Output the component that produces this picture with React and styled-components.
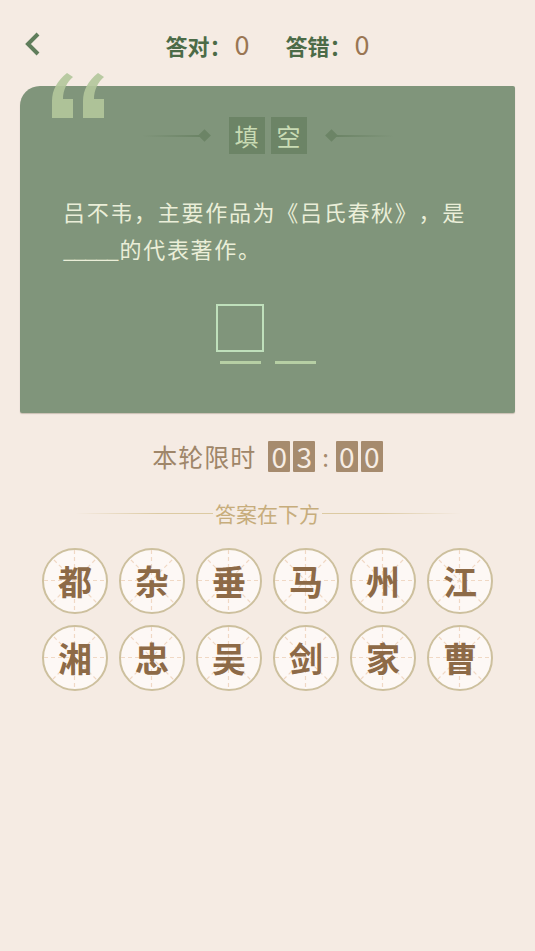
import React from "react";
import styled, { createGlobalStyle } from "styled-components";

const Global = createGlobalStyle`
  html, body { margin: 0; padding: 0; background: #f5ebe3; }
  body { font-family: "Noto Sans CJK SC", "Noto Sans", sans-serif; text-spacing-trim: space-all; }
  * { box-sizing: border-box; }
`;

const Page = styled.div`
  width: 535px;
  min-height: 951px;
  background: #f5ebe3;
  display: flex;
  flex-direction: column;
  align-items: center;
`;

const Header = styled.div`
  width: 100%;
  height: 86px;
  display: grid;
  grid-template-columns: 70px 1fr 70px;
  align-items: start;
  padding-top: 28px;
`;

const BackBtn = styled.div`
  padding-left: 23px;
  height: 32px;
  display: flex;
  align-items: center;
`;

const Scores = styled.div`
  display: flex;
  justify-content: center;
  gap: 36px;
  line-height: 32px;
  font-size: 22px;
`;

const Score = styled.div`
  display: flex;
  align-items: baseline;
`;

const ScoreLabel = styled.span`
  color: #4c6b47;
  font-weight: 700;
`;

const ScoreValue = styled.span`
  color: #9a7653;
  font-size: 27px;
  margin-left: 3px;
`;

const Card = styled.div`
  position: relative;
  width: 495px;
  background: #80957b;
  border-radius: 20px 2px 2px 2px;
  box-shadow: 0 1px 1px rgba(120, 110, 90, 0.35);
  padding: 31px 43px 49px 43px;
  display: flex;
  flex-direction: column;
  align-items: center;
`;

const Quote = styled.svg`
  position: absolute;
  left: 32px;
  top: -13px;
`;

const TagRow = styled.div`
  display: flex;
  align-items: center;
  height: 37px;
`;

const DecoLine = styled.div`
  width: 58px;
  height: 2px;
  background: linear-gradient(${(p) => (p.$flip ? "to left" : "to right")}, rgba(108,132,102,0), #6c8466);
`;

const Diamond = styled.div`
  width: 9px;
  height: 9px;
  background: #6c8466;
  transform: rotate(45deg);
`;

const TagChars = styled.div`
  display: flex;
  gap: 6px;
  margin: 0 20px;
`;

const TagChar = styled.div`
  width: 36px;
  height: 37px;
  background: #6c8466;
  color: #c8dbb4;
  font-size: 24px;
  display: flex;
  align-items: center;
  justify-content: center;
`;

const Question = styled.p`
  align-self: stretch;
  margin: 39px 0 0 0;
  color: #eaeed8;
  font-size: 22px;
  letter-spacing: 1.7px;
  line-height: 37px;
`;

const Blank = styled.span`
  letter-spacing: -1.4px;
  margin-right: 2px;
`;

const Slots = styled.div`
  display: flex;
  gap: 7px;
  margin-top: 37px;
`;

const Slot = styled.div`
  width: 48px;
  display: flex;
  flex-direction: column;
  align-items: center;
  gap: 9px;
`;

const SlotBox = styled.div`
  width: 48px;
  height: 48px;
  border: 2px solid ${(p) => (p.$active ? "#bfe0bb" : "transparent")};
`;

const SlotLine = styled.div`
  width: 41px;
  height: 3px;
  background: #b6cfa4;
`;

const TimerRow = styled.div`
  margin-top: 27px;
  height: 32px;
  display: flex;
  align-items: center;
`;

const TimerLabel = styled.span`
  color: #9f8669;
  font-size: 25px;
  letter-spacing: 1px;
  margin-right: 12px;
`;

const Digits = styled.div`
  display: flex;
  gap: 3px;
`;

const Digit = styled.div`
  width: 22px;
  height: 31px;
  background: #a68b6e;
  color: #f7ede4;
  font-size: 28px;
  line-height: 31px;
  display: flex;
  align-items: center;
  justify-content: center;
  border-radius: 1px;
`;

const Colon = styled.span`
  color: #a68b6e;
  font-size: 24px;
  margin: 0 7px;
  line-height: 31px;
`;

const DividerRow = styled.div`
  margin-top: 29px;
  width: 386px;
  display: flex;
  align-items: center;
  gap: 2px;
`;

const DividerLine = styled.div`
  flex: 1;
  height: 1px;
  background: linear-gradient(${(p) => (p.$flip ? "to left" : "to right")}, rgba(220,202,162,0), #dccaa2 60%);
`;

const DividerText = styled.span`
  color: #c7ad7c;
  font-size: 21px;
  line-height: 24px;
`;

const Grid = styled.div`
  margin-top: 23px;
  display: grid;
  grid-template-columns: repeat(6, 66px);
  column-gap: 11px;
  row-gap: 11px;
`;

const Coin = styled.div`
  position: relative;
  width: 66px;
  height: 66px;
  border-radius: 50%;
  border: 2.5px solid #cdc09e;
  background: #fdf8f5;
  overflow: hidden;
  display: flex;
  align-items: center;
  justify-content: center;
`;

const CoinGrid = styled.svg`
  position: absolute;
  inset: 0;
`;

const CoinChar = styled.span`
  position: relative;
  color: #8d6a47;
  font-size: 34px;
  font-weight: 700;
  line-height: 1;
`;

const chars = ["都", "杂", "垂", "马", "州", "江", "湘", "忠", "吴", "剑", "家", "曹"];

function QuoteMark() {
  const d = "M0,45 H21 V26 H11 C11,17 15,9 21,4 L15,0 C5,8 0,17 0,28 Z";
  return (
    <Quote width="56" height="46" viewBox="0 0 56 46">
      <g fill="#b3c79c" opacity="0.9">
        <path d={d} />
        <path d={d} transform="translate(31,0)" />
      </g>
    </Quote>
  );
}

function CoinLines() {
  return (
    <CoinGrid width="61" height="61" viewBox="0 0 61 61">
      <g stroke="#f0d8c4" strokeWidth="1.2" strokeDasharray="4 3" fill="none">
        <line x1="30.5" y1="0" x2="30.5" y2="61" />
        <line x1="0" y1="30.5" x2="61" y2="30.5" />
        <line x1="0" y1="0" x2="61" y2="61" />
        <line x1="61" y1="0" x2="0" y2="61" />
      </g>
    </CoinGrid>
  );
}

export default function App() {
  return (
    <>
      <Global />
      <Page>
        <Header>
          <BackBtn>
            <svg width="20" height="26" viewBox="0 0 20 26">
              <path d="M15,3 L5,13 L15,23" stroke="#5f7d5b" strokeWidth="4" fill="none" strokeLinejoin="miter" />
            </svg>
          </BackBtn>
          <Scores>
            <Score>
              <ScoreLabel>答对：</ScoreLabel>
              <ScoreValue>0</ScoreValue>
            </Score>
            <Score>
              <ScoreLabel>答错：</ScoreLabel>
              <ScoreValue>0</ScoreValue>
            </Score>
          </Scores>
          <div />
        </Header>

        <Card>
          <QuoteMark />
          <TagRow>
            <DecoLine />
            <Diamond />
            <TagChars>
              <TagChar>填</TagChar>
              <TagChar>空</TagChar>
            </TagChars>
            <Diamond />
            <DecoLine $flip />
          </TagRow>
          <Question>
            吕不韦，主要作品为《吕氏春秋》，是<Blank>_____</Blank>的代表著作。
          </Question>
          <Slots>
            <Slot>
              <SlotBox $active />
              <SlotLine />
            </Slot>
            <Slot>
              <SlotBox />
              <SlotLine />
            </Slot>
          </Slots>
        </Card>

        <TimerRow>
          <TimerLabel>本轮限时</TimerLabel>
          <Digits>
            <Digit>0</Digit>
            <Digit>3</Digit>
          </Digits>
          <Colon>:</Colon>
          <Digits>
            <Digit>0</Digit>
            <Digit>0</Digit>
          </Digits>
        </TimerRow>

        <DividerRow>
          <DividerLine />
          <DividerText>答案在下方</DividerText>
          <DividerLine $flip />
        </DividerRow>

        <Grid>
          {chars.map((c) => (
            <Coin key={c}>
              <CoinLines />
              <CoinChar>{c}</CoinChar>
            </Coin>
          ))}
        </Grid>
      </Page>
    </>
  );
}
